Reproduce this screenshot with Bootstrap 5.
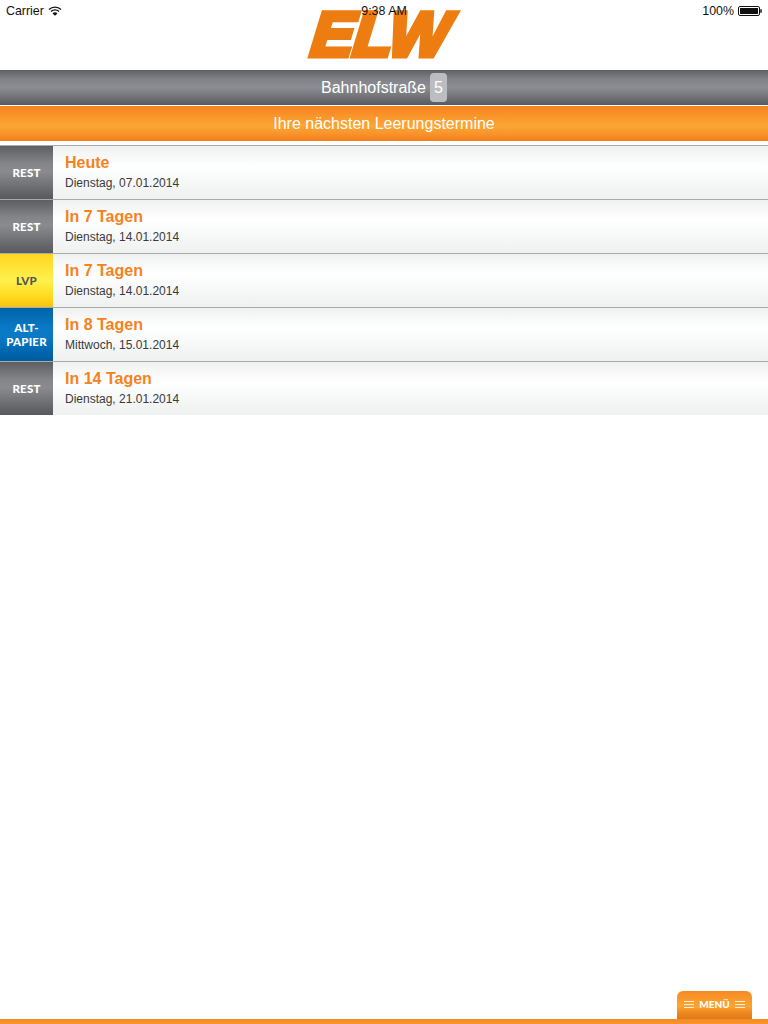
<!DOCTYPE html>
<html lang="de">
<head>
<meta charset="utf-8">
<title>ELW</title>
<link href="https://cdn.jsdelivr.net/npm/bootstrap@5.3.0/dist/css/bootstrap.min.css" rel="stylesheet">
<style>
html,body{height:100%}
body{font-family:"Liberation Sans",Arial,sans-serif;background:#fff;color:#222;height:1024px;overflow:hidden}
.app-shell{height:1024px}
.top-area{height:70px}
.status-strip{position:absolute;top:0;left:0;right:0;height:22px;padding:0 6px;font-size:12.4px;line-height:22px;color:#111;z-index:2}
.status-time{position:absolute;left:0;right:0;top:0;text-align:center}
.logo-word{font-family:"Liberation Sans",Arial,sans-serif;font-weight:700;font-style:italic;font-size:63px;line-height:69px;height:70px;padding:0 6px;margin-right:8px;letter-spacing:-.5px;transform:skewX(-6deg) scaleX(1.02);color:#ee7d11;-webkit-text-stroke:5px #ee7d11}
.street-bar{height:35px;color:#fff;font-size:16px;background:linear-gradient(180deg,#5f6064 0%,#808186 25%,#8d8e93 50%,#77787c 72%,#58595d 100%)}
.num-chip{display:inline-block;background:#bcbdc0;border-radius:4px;width:17px;height:29px;line-height:29px;text-align:center;margin-left:4px;color:#fff}
.orange-bar{height:35px;margin-top:1px;color:#fff;font-size:16px;background:linear-gradient(180deg,#f58220 0%,#f8962b 30%,#fca533 58%,#f9952b 78%,#f37d1c 100%)}
.dates{margin-top:4px}
.date-row{height:54px;border-top:1px solid #a9abab;background:linear-gradient(180deg,#eff0f0 0%,#fbfbfb 25%,#fff 38%,#f8f9f9 62%,#eff1f1 100%)}
.type-tile{width:53px;flex:0 0 53px;font-family:Lato,sans-serif;font-weight:900;font-size:11.5px;line-height:14px;letter-spacing:.2px;text-align:center;color:#fff;padding-top:1px}
.tile-rest{background:linear-gradient(180deg,#5d5e62 0%,#838488 32%,#8a8b8f 48%,#6d6e72 78%,#58595d 100%)}
.tile-lvp{background:linear-gradient(180deg,#ffd520 0%,#ffe93f 35%,#fff04d 50%,#ffdc22 78%,#fcc30d 100%);color:#55565a}
.tile-alt{background:linear-gradient(180deg,#0062a8 0%,#0a7ac6 38%,#0a7ac6 55%,#0068b0 80%,#005a9e 100%)}
.date-text{padding-left:12px}
.date-head{color:#f58220;font-weight:700;font-size:16px;line-height:20px;margin-top:7px}
.date-sub{color:#3a3a3a;font-size:12px;line-height:14px;margin-top:3px}
.menu-tab{width:75px;height:28px;border-radius:6px 6px 0 0;color:#fff;font-family:Lato,sans-serif;font-weight:900;font-size:10px;background:linear-gradient(180deg,#f68a24 0%,#fca533 55%,#f08a20 75%,#dd7a16 100%);margin-right:16px;padding-bottom:2px;gap:5px}
.menu-lines{width:10px;height:7px;border-top:1px solid #fff0dc;border-bottom:1px solid #fff0dc}
.menu-lines::after{content:"";display:block;height:1px;background:#fff0dc;margin-top:2px}
.bottom-line{height:5px;background:linear-gradient(180deg,#f58a24,#f9962c)}
</style>
</head>
<body>
<div class="app-shell d-flex flex-column position-relative">
  <div class="status-strip d-flex justify-content-between align-items-center">
    <div class="d-flex align-items-center gap-1"><span>Carrier</span>
      <svg width="14" height="10" viewBox="0 0 14 10"><path d="M1 3.6a8.5 8.5 0 0 1 12 0M3 5.6a5.6 5.6 0 0 1 8 0" fill="none" stroke="#111" stroke-width="1.4"/><path d="M4.6 7.4a3.2 3.2 0 0 1 4.8 0L7 9.8z" fill="#111"/></svg>
    </div>
    <div class="status-time">9:38 AM</div>
    <div class="d-flex align-items-center gap-1"><span>100%</span>
      <svg width="24" height="10" viewBox="0 0 24 10"><rect x=".5" y=".5" width="21" height="9" rx="1.5" fill="none" stroke="#111"/><rect x="2" y="2" width="18" height="6" fill="#111"/><rect x="22.3" y="3.2" width="1.4" height="3.6" fill="#111"/></svg>
    </div>
  </div>
  <header class="top-area d-flex justify-content-center">
    <div class="logo-word">ELW</div>
  </header>
  <div class="street-bar d-flex align-items-center justify-content-center"><span>Bahnhofstraße</span><span class="num-chip">5</span></div>
  <div class="orange-bar d-flex align-items-center justify-content-center">Ihre nächsten Leerungstermine</div>
  <main class="dates">
    <div class="date-row d-flex">
      <div class="type-tile tile-rest d-flex align-items-center justify-content-center">REST</div>
      <div class="date-text"><div class="date-head">Heute</div><div class="date-sub">Dienstag, 07.01.2014</div></div>
    </div>
    <div class="date-row d-flex">
      <div class="type-tile tile-rest d-flex align-items-center justify-content-center">REST</div>
      <div class="date-text"><div class="date-head">In 7 Tagen</div><div class="date-sub">Dienstag, 14.01.2014</div></div>
    </div>
    <div class="date-row d-flex">
      <div class="type-tile tile-lvp d-flex align-items-center justify-content-center">LVP</div>
      <div class="date-text"><div class="date-head">In 7 Tagen</div><div class="date-sub">Dienstag, 14.01.2014</div></div>
    </div>
    <div class="date-row d-flex">
      <div class="type-tile tile-alt d-flex align-items-center justify-content-center">ALT-<br>PAPIER</div>
      <div class="date-text"><div class="date-head">In 8 Tagen</div><div class="date-sub">Mittwoch, 15.01.2014</div></div>
    </div>
    <div class="date-row d-flex">
      <div class="type-tile tile-rest d-flex align-items-center justify-content-center">REST</div>
      <div class="date-text"><div class="date-head">In 14 Tagen</div><div class="date-sub">Dienstag, 21.01.2014</div></div>
    </div>
  </main>
  <div class="flex-grow-1"></div>
  <div class="d-flex justify-content-end">
    <div class="menu-tab d-flex align-items-center justify-content-center"><span class="menu-lines"></span><span>MENÜ</span><span class="menu-lines"></span></div>
  </div>
  <div class="bottom-line"></div>
</div>
<script src="https://cdn.jsdelivr.net/npm/bootstrap@5.3.0/dist/js/bootstrap.bundle.min.js"></script>
</body>
</html>
